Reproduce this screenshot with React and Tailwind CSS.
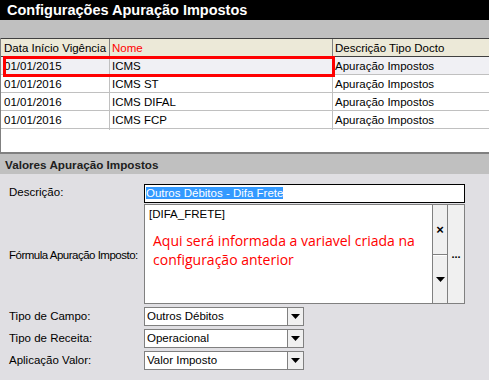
import React from 'react';

const rows = [
  { data: '01/01/2015', nome: 'ICMS', desc: 'Apuração Impostos', selected: true },
  { data: '01/01/2016', nome: 'ICMS ST', desc: 'Apuração Impostos' },
  { data: '01/01/2016', nome: 'ICMS DIFAL', desc: 'Apuração Impostos' },
  { data: '01/01/2016', nome: 'ICMS FCP', desc: 'Apuração Impostos' },
];

function Caret() {
  return (
    <svg width="9" height="5" viewBox="0 0 9 5">
      <path d="M0 0 H9 L4.5 5 Z" fill="#000" />
    </svg>
  );
}

function Select({ value }) {
  return (
    <div className="flex h-[19px] w-[160px] border border-[#808080] bg-white">
      <div className="flex-1 pl-[2px] leading-[17px] text-black">{value}</div>
      <div className="flex w-[16px] items-center justify-center border-l border-[#808080] bg-[#F0F0F0]">
        <Caret />
      </div>
    </div>
  );
}

export default function App() {
  return (
    <div className="h-[380px] w-[489px] overflow-hidden whitespace-nowrap bg-[#E0DFE3] font-['Liberation_Sans',Arial,sans-serif] text-[11.5px] text-black">
      {/* titulo */}
      <div className="h-[20px] bg-black pl-[7px] text-[14.5px] font-bold leading-[20px] text-white">
        Configurações Apuração Impostos
      </div>
      <div className="h-[18px] bg-[#C0C0C0]" />

      {/* grid */}
      <div className="relative h-[116px] border-b-2 border-l border-[#808080] bg-white">
        <div className="grid h-[19px] grid-cols-[108px_223px_1fr] border-y border-[#404040] bg-[#ECE9D8] leading-[18px]">
          <div className="pl-[3px]">Data Início Vigência</div>
          <div className="border-l border-[#808080] pl-[2px] text-[#FF0000]">Nome</div>
          <div className="border-l border-[#808080] pl-[2px]">Descrição Tipo Docto</div>
        </div>
        {rows.map((r, i) => (
          <div
            key={i}
            className={
              'grid h-[18px] grid-cols-[108px_223px_1fr] border-b border-[#C0C0C0] leading-[19px] ' +
              (r.selected ? 'bg-[#F0F0F4]' : 'bg-white')
            }
          >
            <div className="pl-[3px]">{r.data}</div>
            <div className="border-l border-[#C0C0C0] pl-[2px]">{r.nome}</div>
            <div className="border-l border-[#C0C0C0] pl-[2px]">{r.desc}</div>
          </div>
        ))}
        {/* destaque vermelho */}
        <div className="absolute left-[2px] top-[18px] h-[21px] w-[332px] border-[3px] border-[#FF0000]" />
      </div>

      {/* valores */}
      <div className="h-[20px] bg-[#C0C0C0] pl-[5px] text-[11.7px] font-bold leading-[21px] text-[#202020]">
        Valores Apuração Impostos
      </div>
      <div className="pl-[9px] pt-[9px]">
        <div className="flex h-[20px] items-center">
          <div className="w-[135px]">Descrição:</div>
          <div className="h-[19px] w-[321px] border border-black bg-white pl-[1px] leading-[17px]">
            <span className="bg-[#3399FF] text-white">Outros Débitos - Difa Frete</span>
          </div>
        </div>
        <div className="mt-[1px] flex h-[100px] items-center">
          <div className="w-[135px] pt-[3px] tracking-[-0.5px]">Fórmula Apuração Imposto:</div>
          <div className="flex h-[100px] w-[321px] border border-[#808080] bg-white">
            <div className="flex-1 pl-[4px] pt-[2px]">
              <div className="leading-[14px]">[DIFA_FRETE]</div>
              <div className="mt-[10px] pl-[4px] font-['Open_Sans',sans-serif] text-[14px] leading-[19px] text-[#FF0000]">
                Aqui será informada a variavel criada na
                <br />
                configuração anterior
              </div>
            </div>
            <div className="flex w-[15px] flex-col border-l border-[#808080] bg-[#F0F0F0]">
              <div className="flex h-[50px] items-center justify-center border-b border-[#808080] text-[13px] font-bold leading-none">
                ×
              </div>
              <div className="flex flex-1 items-center justify-center border-t border-white">
                <Caret />
              </div>
            </div>
            <div className="flex w-[17px] items-center justify-center border-l border-[#808080] bg-[#F0F0F0] text-[11px] font-bold leading-none">
              ...
            </div>
          </div>
        </div>
        <div className="mt-[3px] flex flex-col gap-[3px]">
          <div className="flex items-center">
            <div className="w-[135px]">Tipo de Campo:</div>
            <Select value="Outros Débitos" />
          </div>
          <div className="flex items-center">
            <div className="w-[135px]">Tipo de Receita:</div>
            <Select value="Operacional" />
          </div>
          <div className="flex items-center">
            <div className="w-[135px]">Aplicação Valor:</div>
            <Select value="Valor Imposto" />
          </div>
        </div>
      </div>
    </div>
  );
}
